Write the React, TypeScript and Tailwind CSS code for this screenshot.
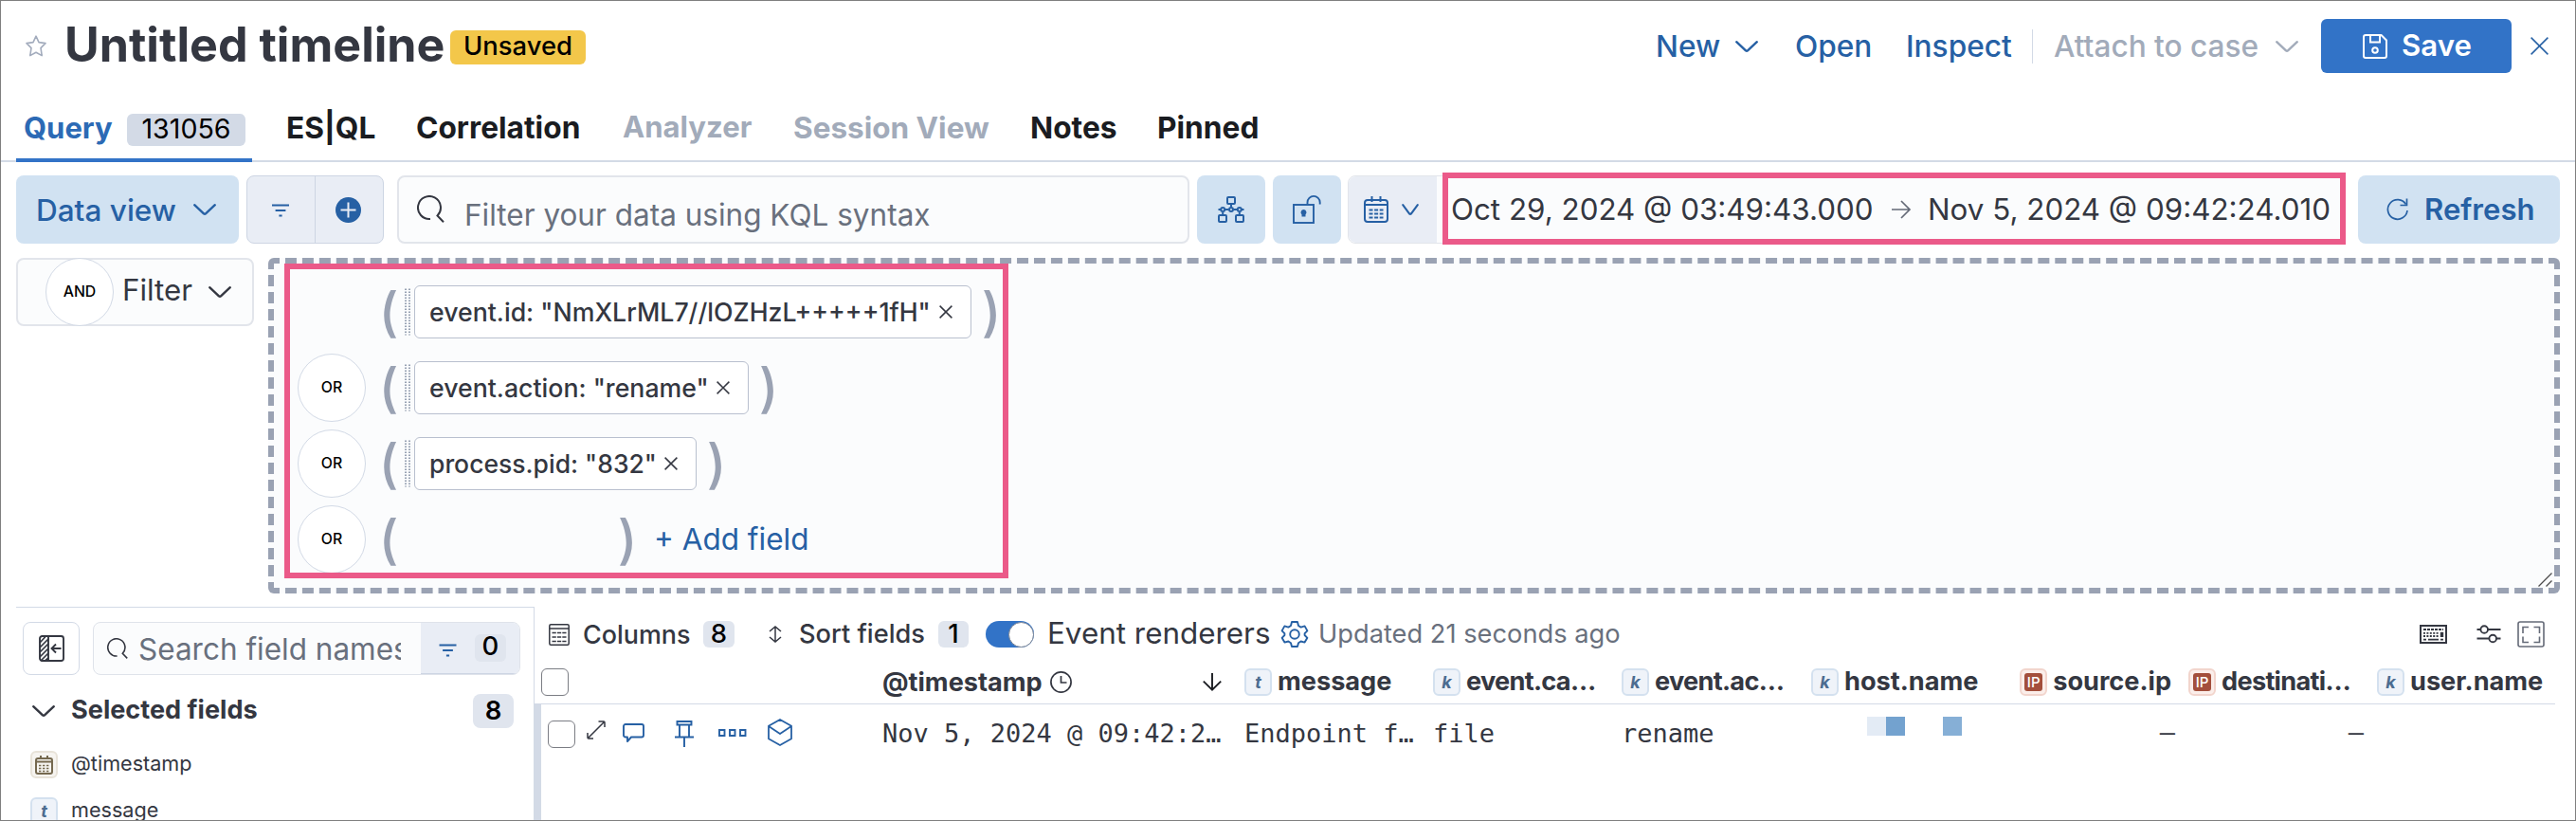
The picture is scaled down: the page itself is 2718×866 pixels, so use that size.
import type { ReactNode } from "react";

type IconProps = { className?: string };

const BLUE = "#2660a4";
const INK = "#343741";

function Svg({ w, h, className = "", stroke = BLUE, sw = 2, children }: { w: number; h: number; className?: string; stroke?: string; sw?: number; children: ReactNode }) {
  return (
    <svg width={w} height={h} viewBox={`0 0 ${w} ${h}`} fill="none" stroke={stroke} strokeWidth={sw} className={`shrink-0 overflow-visible ${className}`}>
      {children}
    </svg>
  );
}

function Chevron({ className, stroke, w = 24, sw = 2.4 }: { className?: string; stroke?: string; w?: number; sw?: number }) {
  return (
    <Svg w={w} h={12} className={className} stroke={stroke} sw={sw}>
      <path d={`M1.2 1.2 L${w / 2 - 1} 10.4 Q${w / 2} 11.3 ${w / 2 + 1} 10.4 L${w - 1.2} 1.2`} strokeLinecap="round" strokeLinejoin="round" />
    </Svg>
  );
}

function Cross({ className, stroke = INK, w = 14 }: { className?: string; stroke?: string; w?: number }) {
  return (
    <Svg w={w} h={w} className={className} stroke={stroke} sw={1.5}>
      <path d={`M0.6 0.6 L${w - 0.6} ${w - 0.6} M${w - 0.6} 0.6 L0.6 ${w - 0.6}`} />
    </Svg>
  );
}

function StarIcon({ className }: IconProps) {
  return (
    <Svg w={22} h={23} className={className} stroke="#a3acbd" sw={1.6}>
      <path strokeLinejoin="round" d="M11 1.2 L14 7.6 L21 8.6 L16 13.6 L17.2 21.6 L11 18.2 L4.8 21.6 L6 13.6 L1 8.6 L8 7.6 Z" />
    </Svg>
  );
}

function MagnifierIcon({ className, small = false }: IconProps & { small?: boolean }) {
  return (
    <svg width={small ? 22 : 29} height={small ? 22 : 29} viewBox="0 0 29 29" fill="none" stroke={INK} strokeWidth={small ? 2.1 : 2} className={`shrink-0 ${className}`}>
      <path d="M14 25 A12 12 0 1 1 21.5 21.5 L28 28.2" />
    </svg>
  );
}

function FilterLines({ className, big = false }: IconProps & { big?: boolean }) {
  return (
    <svg width={big ? 19 : 18} height={14} viewBox="0 0 18 14" fill="none" stroke={BLUE} strokeWidth={1.9} className={`shrink-0 ${className}`}>
      <path d="M0 1.5 H18 M3.6 7 H14.4 M7.4 12.5 H10.6" />
    </svg>
  );
}

function TreeIcon() {
  return (
    <Svg w={28} h={28} sw={2}>
      <rect x="10" y="1" width="8" height="7" rx="1" />
      <path d="M14 8 V11.5 M0.5 14 H4 M7 14 H11.5 M16.5 14 H21 M24 14 H27.5 M5.2 17 V20 M22.8 17 V20" />
      <circle cx="5.2" cy="14" r="2" />
      <circle cx="14" cy="14" r="2" />
      <circle cx="22.8" cy="14" r="2" />
      <rect x="1" y="20" width="8" height="7" rx="1" />
      <rect x="19" y="20" width="8" height="7" rx="1" />
    </Svg>
  );
}

function UnlockIcon() {
  return (
    <Svg w={30} h={30} sw={1.9}>
      <rect x="1" y="10" width="21" height="19" />
      <path d="M15.5 9.5 V7.5 A6.6 6.6 0 0 1 28.7 7.5 V9.5" />
      <path d="M11.5 15 a3 3 0 0 1 2 5.2 V22.5 H9.5 V20.2 a3 3 0 0 1 2 -5.2Z" fill={BLUE} stroke="none" />
    </Svg>
  );
}

function CalendarIcon() {
  return (
    <Svg w={26} h={28} sw={2}>
      <rect x="1" y="4" width="24" height="23" rx="3" />
      <path d="M1 9 H25 M8.5 0 V6 M17.5 0 V6" />
      <path d="M5.5 14.5 H20.5 M5.5 18.5 H20.5 M5.5 22.5 H20.5" strokeDasharray="4 1.6" strokeWidth={2.2} />
    </Svg>
  );
}

function ArrowRight({ className }: IconProps) {
  return (
    <Svg w={20} h={20} className={className} stroke="#646a77" sw={1.7}>
      <path d="M0 10 H18.6 M10 1 L19 10 L10 19" />
    </Svg>
  );
}

function RefreshIcon({ className }: IconProps) {
  return (
    <Svg w={24} h={24} className={className} sw={1.7}>
      <path d="M20.5 6.5 A10.3 10.3 0 1 0 22 13" />
      <path d="M21.5 0.5 V7.5 H14.5" />
    </Svg>
  );
}

function DiskIcon({ className }: IconProps) {
  return (
    <Svg w={26} h={26} className={className} stroke="#ffffff" sw={2}>
      <path strokeLinejoin="round" d="M3 1 H19.5 L25 6.5 V23 A2 2 0 0 1 23 25 H3 A2 2 0 0 1 1 23 V3 A2 2 0 0 1 3 1Z" />
      <path d="M8 1 V8.5 H18 V1" />
      <circle cx="13" cy="17" r="2.8" />
    </Svg>
  );
}

function CollapseIcon() {
  return (
    <Svg w={27} h={28} stroke={INK} sw={1.9}>
      <rect x="1" y="1" width="25" height="26" rx="2.5" />
      <path d="M10 1 V27 M13.5 14 H23.5 M18 9.5 L13.5 14 L18 18.5" />
      <path d="M1 8 L7 1.5 M1 13 L10 4 M1 18 L10 9 M1 23 L10 14 M2 27 L10 19 M6 27.5 L10 24" strokeWidth={1.7} />
    </Svg>
  );
}

function TableIcon() {
  return (
    <Svg w={22} h={23} stroke={INK} sw={1.5}>
      <rect x="0.8" y="0.8" width="20.4" height="21.4" rx="1.5" />
      <path d="M1 5 H21" />
      <path d="M3.5 9.5 H18.5 M3.5 14 H18.5 M3.5 18.5 H18.5" strokeDasharray="4.3 1.1" strokeWidth={1.5} />
    </Svg>
  );
}

function SortIcon({ className }: IconProps) {
  return (
    <Svg w={14} h={18} className={className} stroke={INK} sw={1.5}>
      <path d="M7 1 V17 M1 6 L7 0.9 L13 6 M1 12 L7 17.1 L13 12" />
    </Svg>
  );
}

function GearIcon({ className }: IconProps) {
  return (
    <Svg w={28} h={28} className={className} sw={1.9}>
      <path strokeLinejoin="round" d="M11 1 H17 L18 5 L20.6 6.6 L24.6 5.4 L27.4 10.4 L24.6 13.2 V15 L27.4 17.8 L24.6 22.6 L20.6 21.5 L18 23.2 L17 27 H11 L10 23.2 L7.4 21.5 L3.4 22.6 L0.6 17.8 L3.4 15 V13.2 L0.6 10.4 L3.4 5.4 L7.4 6.6 L10 5 Z" />
      <circle cx="14" cy="14" r="4.8" />
    </Svg>
  );
}

function KeyboardIcon() {
  return (
    <Svg w={29} h={20} stroke={INK} sw={2}>
      <rect x="1" y="1" width="27" height="18" />
      <path d="M4 5 H25" strokeDasharray="3 1" strokeWidth={1.8} />
      <path d="M4 8.8 H21 M4 12 H21" strokeDasharray="2 1.4" strokeWidth={1.8} />
      <path d="M4 15.7 H7 M9 15.7 H20 M22 15.7 H25" strokeWidth={1.8} />
      <path d="M23.5 7.8 V13" strokeWidth={3.4} />
    </Svg>
  );
}

function SlidersIcon({ className }: IconProps) {
  return (
    <Svg w={26} h={20} className={className} stroke={INK} sw={1.9}>
      <path d="M0.5 5 H4.5 M12 5 H25.5 M0.5 14.5 H13.5 M21 14.5 H25.5" />
      <circle cx="8.2" cy="5" r="3.8" />
      <circle cx="17.2" cy="14.5" r="3.8" />
    </Svg>
  );
}

function FullscreenIcon({ className }: IconProps) {
  return (
    <Svg w={29} h={28} className={className} stroke="#646a77" sw={1.6}>
      <rect x="1" y="1" width="27" height="26" rx="2" />
      <path d="M6 13 V6.5 H12 M17.5 6.5 H23.5 V13 M23.5 16.5 V22.5 H17.5 M12 22.5 H6 V16.5" />
    </Svg>
  );
}

function ClockIcon({ className }: IconProps) {
  return (
    <Svg w={23} h={23} className={className} stroke={INK} sw={1.7}>
      <circle cx="11.5" cy="11.5" r="10.6" />
      <path d="M11.5 5 V12 H17.5" />
    </Svg>
  );
}

function ArrowDown({ className }: IconProps) {
  return (
    <Svg w={20} h={19} className={className} stroke="#1a1c21" sw={1.9}>
      <path d="M10 0 V17.5 M0.8 8.6 L10 17.6 L19.2 8.6" />
    </Svg>
  );
}

function RowIcons() {
  return (
    <div className="flex items-start">
      <Svg w={20} h={20} className="ml-3" stroke={INK} sw={1.5}>
        <path d="M2 18 L18 2 M12.5 1 H18 A1 1 0 0 1 19 2 V7 M1 13 V18 A1 1 0 0 0 2 19 H7" />
      </Svg>
      <Svg w={23} h={20} className="mt-[3px] ml-[18px]" sw={1.9}>
        <path strokeLinejoin="round" d="M3 1 H20 A2 2 0 0 1 22 3 V12.5 A2 2 0 0 1 20 14.5 H9 L5 19 V14.5 H3 A2 2 0 0 1 1 12.5 V3 A2 2 0 0 1 3 1Z" />
      </Svg>
      <Svg w={20} h={28} className="ml-8" sw={1.9}>
        <path d="M2.5 1 H17.5 V4.5 H2.5Z M5 4.5 V17.5 M15 4.5 V17.5 M0 17.5 H20 M10 17.5 V28" />
      </Svg>
      <Svg w={30} h={8} className="mt-[9px] ml-[26px]" sw={1.9}>
        <path d="M1 1 H6.5 V7 H1Z M12 1 H17.5 V7 H12Z M23 1 H28.5 V7 H23Z" />
      </Svg>
      <Svg w={26} h={29} className="-mt-0.5 ml-[22px]" sw={1.8}>
        <path strokeLinejoin="round" d="M13 1 L25 7.8 V21.2 L13 28 L1 21.2 V7.8Z M1 8 L13 16 L25 8" />
      </Svg>
    </div>
  );
}

function Token({ kind }: { kind: "t" | "k" | "ip" }) {
  if (kind === "ip") {
    return (
      <span className="flex size-[29px] shrink-0 items-center justify-center rounded-md border-2 border-[#f2d5cd] bg-[#fbeeea]">
        <span className="flex h-[19px] w-[19px] items-center justify-center rounded-[3px] bg-[#a34f3c] text-[15px] leading-none font-medium text-white">IP</span>
      </span>
    );
  }
  return (
    <span className="flex size-[29px] shrink-0 items-center justify-center rounded-md border-2 border-[#d4e1ef] bg-[#eff3f9] text-[18px] leading-none font-bold text-[#4c6c90] italic">
      {kind}
    </span>
  );
}

function DateToken() {
  return (
    <span className="flex size-[29px] shrink-0 items-center justify-center rounded-md border-2 border-[#e8e3d9] bg-[#f6f4f0]">
      <Svg w={19} h={20} stroke="#75694f" sw={2}>
        <rect x="1" y="3" width="17" height="16" rx="2" />
        <path d="M1 6.5 H18 M6 0 V4 M13 0 V4" />
        <path d="M4 10.5 H15 M4 13.5 H15 M4 16.5 H15" strokeDasharray="2.4 1.6" strokeWidth={1.6} />
      </Svg>
    </span>
  );
}

function OrCircle({ label = "OR" }: { label?: string }) {
  return (
    <span className="flex size-[72px] shrink-0 items-center justify-center rounded-full border border-[#d3dae6] bg-white text-[15.8px] leading-none font-medium text-black">
      {label}
    </span>
  );
}

function Paren({ children, className = "" }: { children: string; className?: string }) {
  return <span className={`w-6 shrink-0 text-center text-[56px] leading-none font-medium text-[#9aa2b3] ${className}`}>{children}</span>;
}

function Grip() {
  return (
    <Svg w={6} h={50} className="ml-[5px]" stroke="#98a2b3" sw={2}>
      <path d="M1 0.5 V49.5 M5 0.5 V49.5" strokeDasharray="1.6 1.4" />
    </Svg>
  );
}

function Chip({ text, width }: { text: string; width: string }) {
  return (
    <>
      <Grip />
      <span className={`ml-1 flex h-14 shrink-0 items-center justify-between rounded-md border border-[#b9c0cf] bg-white pr-[19px] pl-[15px] leading-none font-medium whitespace-pre ${width}`}>
        {text}
        <Cross />
      </span>
      <Paren className="ml-[9px]">{")"}</Paren>
    </>
  );
}

function Tab({ label, className }: { label: string; className: string }) {
  return <span className={`flex shrink-0 items-center pt-1 ${className}`}>{label}</span>;
}

const COLUMNS: { name: string; kind: "t" | "k" | "ip"; right?: boolean; tight?: boolean }[] = [
  { name: "message", kind: "t" },
  { name: "event.ca…", kind: "k", tight: true },
  { name: "event.ac…", kind: "k", tight: true },
  { name: "host.name", kind: "k" },
  { name: "source.ip", kind: "ip", right: true },
  { name: "destinati…", kind: "ip", tight: true },
  { name: "user.name", kind: "k" },
];

export default function App() {
  return (
    <div className="flex h-[866px] w-[2718px] flex-col overflow-hidden border border-[#7f7f7f] bg-white font-['Inter',sans-serif] leading-none whitespace-nowrap text-[#343741]">
      {/* Title bar */}
      <header className="flex h-[95px] shrink-0 items-center pl-[26px] text-[31.6px] font-medium text-[#2660a4]">
        <StarIcon />
        <h1 className="ml-[19px] w-[400px] pb-0.5 text-[50.2px] font-bold text-[#343741]">Untitled timeline</h1>
        <span className="mt-0.5 ml-[7px] flex h-9 w-[143px] items-center justify-center rounded-md bg-[#f3c74a] pb-0.5 text-[27.4px] text-black">Unsaved</span>
        <span className="ml-auto w-[68px]">New</span>
        <Chevron className="ml-[16px]" />
        <span className="ml-[39px] w-[117px]">Open</span>
        <span className="w-[133px]">Inspect</span>
        <span className="h-9 w-px bg-[#d3dae6]" />
        <span className="ml-[22px] w-[217px] text-[#a2abba]">Attach to case</span>
        <Chevron className="ml-[17px]" stroke="#a2abba" />
        <button className="ml-6 flex h-[57px] w-[201px] items-center rounded-md bg-[#3273c7] pl-11 font-semibold text-white">
          <DiskIcon />
          <span className="ml-[15px] text-[31.2px]">Save</span>
        </button>
        <Cross className="mr-[28px] ml-[20px]" stroke={BLUE} w={19} />
      </header>

      {/* Tabs */}
      <nav className="flex h-[75px] shrink-0 border-b-2 border-[#d3dae6] pl-4 text-[31.7px] font-bold text-[#1a1c21]">
        <span className="-mb-0.5 flex w-[249px] shrink-0 items-center border-b-4 border-[#3273c7] pt-[6px] pl-2 text-[#2c6ab5]">
          <span className="w-[109px] text-[31px]">Query</span>
          <span className="mt-[5px] flex h-[34px] w-[125px] items-center justify-center rounded-md bg-[#d3dae6] pb-0.5 text-[28.6px] font-normal text-black">131056</span>
        </span>
        <Tab label="ES|QL" className="ml-[36px] w-[137px]" />
        <Tab label="Correlation" className="w-[218px]" />
        <Tab label="Analyzer" className="w-[180px] text-[31.1px] text-[#a2abba]" />
        <Tab label="Session View" className="w-[250px] text-[31.5px] text-[#a2abba]" />
        <Tab label="Notes" className="w-[134px]" />
        <Tab label="Pinned" className="" />
      </nav>

      {/* Query toolbar */}
      <section className="mt-[14px] flex h-[72px] shrink-0 pl-4 text-[31.5px]">
        <button className="flex w-[235px] items-center rounded-lg bg-[#d1e2f2] pl-[21px] text-left font-medium text-[#2660a4]">
          <span className="w-[166px] pt-0.5">Data view</span>
          <Chevron />
        </button>
        <div className="ml-2 flex w-[145px] rounded-lg border border-[#cdd5e3] bg-[#e9edf5]">
          <span className="flex w-[72px] items-center justify-center border-r border-[#cdd5e3] pr-px">
            <FilterLines className="mt-0.5" />
          </span>
          <span className="flex flex-1 items-center justify-center pr-0.5">
            <Svg w={27} h={27} stroke="#e9edf5" sw={2}>
              <circle cx="13.5" cy="13.5" r="13.5" fill={BLUE} stroke="none" />
              <path d="M13.5 5.5 V21.5 M5.5 13.5 H21.5" />
            </Svg>
          </span>
        </div>
        <div className="ml-[14px] flex w-[836px] items-center rounded-lg border-2 border-[#e2e5eb] bg-[#fbfcfd] pl-[19px] text-[#69707d]">
          <MagnifierIcon className="mb-px" />
          <span className="mt-3 ml-[21px]">Filter your data using KQL syntax</span>
        </div>
        <button className="ml-2 flex w-[72px] items-center justify-center rounded-lg bg-[#d1e2f2]">
          <TreeIcon />
        </button>
        <button className="ml-2 flex w-[72px] items-center justify-center rounded-lg bg-[#d1e2f2]">
          <UnlockIcon />
        </button>
        <div className="relative ml-[7px] flex w-[1053px] rounded-l-lg border border-[#e2e5eb] bg-[#fbfcfd] text-[31.35px]">
          <span className="flex w-[93px] shrink-0 items-center rounded-l-lg bg-[#e9edf5] pl-4">
            <CalendarIcon />
            <Chevron className="ml-[14px]" w={18} sw={2.1} />
          </span>
          <span className="flex items-center pl-[15px]">
            <span className="w-[465px] pt-0.5">Oct 29, 2024 @ 03:49:43.000</span>
            <ArrowRight />
            <span className="ml-[18px] pt-0.5">Nov 5, 2024 @ 09:42:24.010</span>
          </span>
          <span className="absolute -top-1 left-[99px] h-[76px] w-[953px] border-6 border-[#eb5a89]" />
        </div>
        <button className="ml-[13px] flex w-[213px] items-center rounded-lg bg-[#d1e2f2] pl-[30px] font-semibold text-[#2660a4]">
          <RefreshIcon />
          <span className="ml-[16px] pt-0.5 text-[31.1px]">Refresh</span>
        </button>
      </section>

      {/* Data providers */}
      <section className="mt-[15px] flex h-[354px] shrink-0 items-start pl-4">
        <div className="flex h-[72px] w-[251px] items-center rounded-lg border-2 border-[#e2e5eb] bg-[#fbfcfd] pl-[29px] text-[31.3px]">
          <OrCircle label="AND" />
          <span className="mb-0.5 ml-[9px] w-[91px]">Filter</span>
          <Chevron stroke={INK} />
        </div>
        <div className="relative ml-[15px] h-[354px] w-[2418px] rounded-md border-6 border-dashed border-[#9aa2b3] bg-[#fbfcfd] pt-[11px] pl-[25px] text-[26.75px]">
          <div className="flex h-20 items-center">
            <span className="w-[72px]" />
            <Paren className="ml-3">(</Paren>
            <Chip text={'event.id: "NmXLrML7//lOZHzL+++++1fH"'} width="w-[588px] text-[26.7px]" />
          </div>
          <div className="flex h-20 items-center">
            <OrCircle />
            <Paren className="ml-3">(</Paren>
            <Chip text={'event.action: "rename"'} width="w-[353px] text-[26.7px]" />
          </div>
          <div className="flex h-20 items-center">
            <OrCircle />
            <Paren className="ml-3">(</Paren>
            <Chip text={'process.pid: "832"'} width="w-[298px] text-[26.5px]" />
          </div>
          <div className="flex h-20 items-center">
            <OrCircle />
            <Paren className="ml-3">(</Paren>
            <Paren className="ml-[228px]">{")"}</Paren>
            <span className="ml-[16px] text-[31.5px] text-[#2660a4]">+ Add field</span>
          </div>
          <span className="absolute top-0 left-[11px] h-[332px] w-[764px] border-6 border-[#eb5a89]" />
          <Svg w={15} h={15} className="absolute right-[2px] bottom-[1px]" stroke="#4b4b4b" sw={1.3}>
            <path d="M0.5 14.5 L14.5 0.5 M8.5 14.5 L14.5 8.5" />
          </Svg>
        </div>
      </section>

      {/* Results */}
      <main className="mt-[14px] flex min-h-0 flex-1 pl-4">
        <aside className="w-[546px] shrink-0 border-t border-[#d3dae6]">
          <div className="mt-[15px] flex h-14 pl-[7px]">
            <button className="flex w-[60px] items-center justify-center rounded-lg border border-[#d3dae6]">
              <CollapseIcon />
            </button>
            <div className="ml-[14px] flex w-[451px] overflow-hidden rounded-lg border border-[#dfe3ea] bg-[#fbfcfd]">
              <span className="flex w-[345px] items-center pl-[14px] text-[31.5px] text-[#69707d]">
                <MagnifierIcon small />
                <span className="ml-[11px] w-[277px] overflow-hidden pt-[9px] pb-2">Search field names</span>
              </span>
              <span className="flex flex-1 items-center border-b border-[#cdd5e3] bg-[#e9edf5] pl-[19px]">
                <FilterLines big className="mt-1" />
                <span className="ml-[19px] flex h-[29px] w-[33px] items-center justify-center rounded-md bg-[#e0e5ee] pb-[3px] text-[27.5px] font-medium text-black">0</span>
              </span>
            </div>
          </div>
          <div className="mt-5 flex h-9 items-center pl-[17px]">
            <Chevron stroke={INK} />
            <span className="mt-[-2px] ml-[17px] flex-1 text-[27.1px] font-bold">Selected fields</span>
            <span className="mr-[21px] flex w-[43px] items-center justify-center self-stretch rounded-lg bg-[#e0e5ee] text-[27.5px] font-semibold text-black">8</span>
          </div>
          <div className="mt-6 flex h-[29px] items-center pl-[15px]">
            <DateToken />
            <span className="ml-[14px] pb-px text-[21.6px]">@timestamp</span>
          </div>
          <div className="mt-5 flex h-[29px] items-center pl-[15px]">
            <Token kind="t" />
            <span className="ml-[14px] pb-px text-[21.6px]">message</span>
          </div>
        </aside>
        <div className="flex w-2 shrink-0 flex-col">
          <span className="h-[102px] border-l border-[#d3dae6]" />
          <span className="flex-1 bg-[#d3dae6]" />
        </div>
        <div className="w-[2125px] shrink-0">
          <div className="flex h-[43px] items-center pt-[15px] pl-2 text-[26.9px] font-medium">
            <TableIcon />
            <span className="ml-[14px] w-[127px]">Columns</span>
            <span className="flex h-7 w-[33px] items-center justify-center rounded-md bg-[#e0e5ee] text-[27.5px] text-black">8</span>
            <SortIcon className="ml-[36px]" />
            <span className="ml-[18px] w-[147px] text-[27.2px]">Sort fields</span>
            <span className="flex h-7 w-8 items-center justify-center rounded-md bg-[#e0e5ee] text-[27.5px] text-black">1</span>
            <span className="ml-[18px] flex h-7 w-[51px] items-center justify-end rounded-full bg-[#3273c7]">
              <span className="size-[27px] rounded-full border border-[#7b8494] bg-white" />
            </span>
            <span className="ml-[14px] w-[247px] text-[31.4px] font-normal">Event renderers</span>
            <GearIcon />
            <span className="ml-[11px] flex-1 text-[27.25px] font-normal text-[#69707d]">Updated 21 seconds ago</span>
            <KeyboardIcon />
            <SlidersIcon className="ml-[31px]" />
            <FullscreenIcon className="mr-[11px] ml-[17px]" />
          </div>
          <div className="mt-[14px] grid h-[46px] grid-cols-[360px_382px_199px_199px_200px_199px_199px_199px_188px] items-center border-b border-[#d3dae6] text-[27.15px] font-bold">
            <span className="size-[29px] rounded-md border border-[#7b7d84] bg-white" />
            <span className="flex items-center">
              <span className="w-[176px]">@timestamp</span>
              <ClockIcon className="ml-px" />
              <ArrowDown className="ml-[138px]" />
            </span>
            {COLUMNS.map((c) => (
              <span key={c.name} className={`flex items-center ${c.right ? "justify-end pr-[18px]" : ""}`}>
                <Token kind={c.kind} />
                <span className={`ml-[6px] pb-0.5 ${c.tight ? "tracking-[-0.7px]" : ""}`}>{c.name}</span>
              </span>
            ))}
          </div>
          <div className="grid h-[63px] grid-cols-[360px_382px_199px_199px_200px_199px_199px_199px_188px] items-center font-['DejaVu_Sans_Mono',monospace] text-[27px]">
            <span className="flex items-start pl-[7px]">
              <span className="size-[29px] rounded-md border border-[#7b7d84] bg-white" />
              <RowIcons />
            </span>
            <span className="pb-0.5">Nov 5, 2024 @ 09:42:2…</span>
            <span className="pb-0.5">Endpoint f…</span>
            <span className="pb-0.5">file</span>
            <span className="pb-0.5">rename</span>
            <span className="flex pb-[17px] pl-[59px]">
              <span className="size-5 bg-[#e3ebf5]" />
              <span className="size-5 bg-[#73a2cf]" />
              <span className="ml-10 size-5 bg-[#86afd6]" />
            </span>
            <span className="pr-[14px] pb-[6px] text-right">—</span>
            <span className="pr-[14px] pb-[6px] text-right">—</span>
          </div>
        </div>
      </main>
    </div>
  );
}
